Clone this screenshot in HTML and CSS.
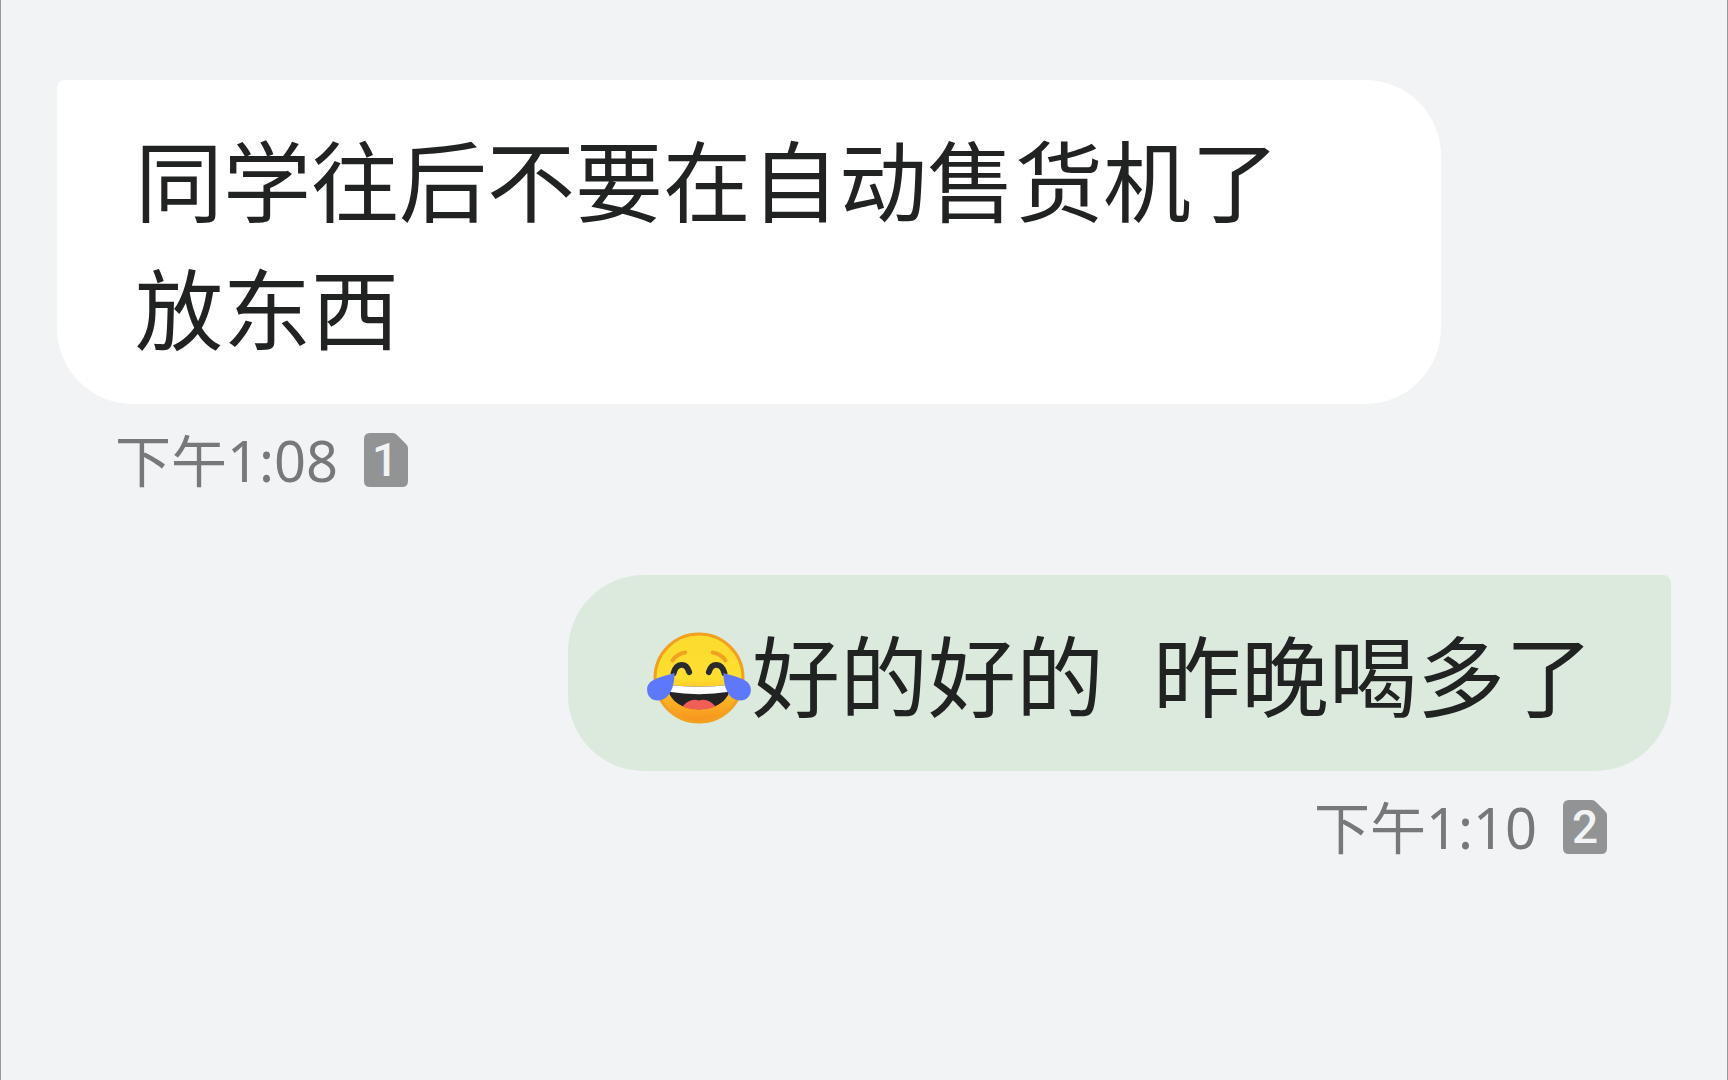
FILE: index.html
```html
<!DOCTYPE html>
<html lang="zh-CN">
<head>
  <meta charset="UTF-8">
  <meta name="viewport" content="width=device-width, initial-scale=1">
  <title>短信</title>
  <link rel="stylesheet" href="styles.css">
</head>
<body>
  <main class="chat">
    <div class="message received">
      <p class="bubble">同学往后不要在自动售货机了放东西</p>
      <div class="meta">
        <time datetime="13:08">下午1:08</time>
        <svg class="sim" viewBox="0 0 44 54" role="img" aria-label="SIM 1">
          <path class="sim-card" d="M6 0H29Q31 0 33 2L42 11Q44 13 44 15V48Q44 54 38 54H6Q0 54 0 48V6Q0 0 6 0Z"/>
          <text class="sim-number" x="21" y="43">1</text>
        </svg>
      </div>
    </div>
    <div class="message sent">
      <p class="bubble"><svg class="emoji" viewBox="0 0 108 94" role="img" aria-label="笑哭">
          <defs>
            <linearGradient id="face" x1="0" y1="0" x2="0" y2="1">
              <stop offset="0" stop-color="#fcdb2e"/>
              <stop offset="0.5" stop-color="#fede2f"/>
              <stop offset="0.75" stop-color="#fbb224"/>
              <stop offset="1" stop-color="#f7931e"/>
            </linearGradient>
          </defs>
          <circle cx="54" cy="47" r="45" fill="url(#face)" stroke="#f2a01f" stroke-width="3"/>
          <path d="M27 29Q32 22 40 21M68 21Q76 22 81 29" fill="none" stroke="#f2a01f" stroke-width="4" stroke-linecap="round"/>
          <path d="M28 42C31 31 41 31 44 41M64 41C67 31 77 31 80 42" fill="none" stroke="#2b2b2b" stroke-width="6" stroke-linecap="round"/>
          <path d="M22 54Q54 58 86 54C86 70 72 79 54 79S22 70 22 54Z" fill="#242424"/>
          <path d="M22 54Q54 58 86 54Q87 58 85 61Q54 66 23 61Q21 58 22 54Z" fill="#fff"/>
          <path d="M37 76Q45 67 54 70Q63 67 71 76Q54 83 37 76Z" fill="#f05f55"/>
          <path d="M29 42C29 56 24 70 12 70C5 70 1 65 1 59C1 48 16 46 29 42Z" fill="#5d78fb"/>
          <path d="M79 42C79 56 84 70 96 70C103 70 107 65 107 59C107 48 92 46 79 42Z" fill="#5d78fb"/>
        </svg>好的好的  昨晚喝多了</p>
      <div class="meta">
        <time datetime="13:10">下午1:10</time>
        <svg class="sim" viewBox="0 0 44 54" role="img" aria-label="SIM 2">
          <path class="sim-card" d="M6 0H29Q31 0 33 2L42 11Q44 13 44 15V48Q44 54 38 54H6Q0 54 0 48V6Q0 0 6 0Z"/>
          <text class="sim-number" x="22" y="43">2</text>
        </svg>
      </div>
    </div>
  </main>
</body>
</html>
```

FILE: styles.css
```css
* {
  box-sizing: border-box;
}
body {
  margin: 0;
  background: #f1f3f5;
  color: #212322;
}
.chat {
  min-height: 100vh;
  padding: 80px 56px;
  border-left: 1px solid #98999b;
  border-right: 1px solid #98999b;
  display: flex;
  flex-direction: column;
  gap: 83px;
}
.message {
  display: flex;
  flex-direction: column;
}
.received {
  margin-right: 230px;
}
.sent {
  align-items: flex-end;
}
.bubble {
  margin: 0;
  padding: 41px 78px 27px;
  font-family: "Liberation Sans", "Noto Sans CJK SC", sans-serif;
  font-size: 88px;
  line-height: 128px;
  white-space: pre-wrap;
}
.received .bubble {
  background: #fff;
  border-radius: 8px 76px 76px 76px;
}
.sent .bubble {
  background: #dceadd;
  border-radius: 76px 8px 76px 76px;
}
.emoji {
  width: 106px;
  height: 92px;
  vertical-align: -14px;
}
.meta {
  display: flex;
  align-items: center;
  gap: 26px;
  margin-top: 24px;
  padding: 0 64px 0 58px;
  color: #77787a;
  font-family: "Noto Sans", "Noto Sans CJK SC", sans-serif;
  font-size: 56px;
  line-height: 64px;
}
.sim {
  width: 44px;
  height: 54px;
}
.sim-card {
  fill: #929395;
}
.sim-number {
  fill: #f1f3f5;
  font-family: Roboto, sans-serif;
  font-size: 46px;
  font-weight: 500;
  text-anchor: middle;
}
```
